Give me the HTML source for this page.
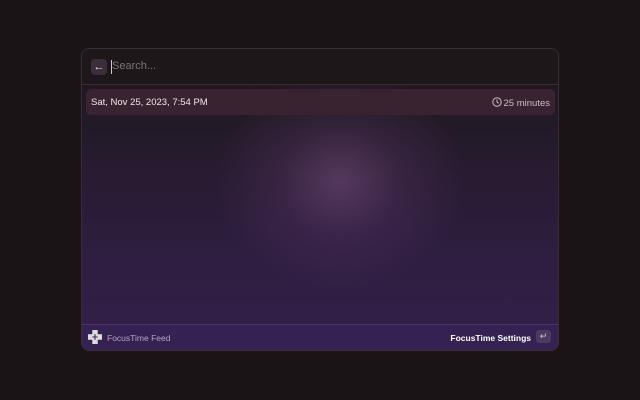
<!DOCTYPE html>
<html><head><style>
body{margin:0;width:640px;height:400px;background:#1a1416;font-family:"Liberation Sans",sans-serif;overflow:hidden;position:relative}
.win{position:absolute;left:81px;top:48px;width:478px;height:303px;border-radius:8px;overflow:hidden;border:1px solid #3a2d3a;box-sizing:border-box;
background:radial-gradient(ellipse 125px 110px at 258px 132px,rgba(130,85,135,.5),rgba(95,55,105,.28) 50%,rgba(0,0,0,0) 100%),linear-gradient(#1d171b 0px,#221a26 70px,#2c1d3c 180px,#34204c 303px)}
.hdr{position:absolute;left:0;top:0;right:0;height:35px;border-bottom:1px solid #3a2a38;background:#1d171a}
.back{position:absolute;left:9px;top:10px;width:16px;height:16px;border-radius:4px;background:#3b2d3a;color:#eee;font-size:11px;text-align:center;line-height:16px}
.cur{position:absolute;left:29px;top:11px;width:1px;height:14px;background:#ccc}
.ph{position:absolute;left:30px;top:11px;font-size:11px;color:#7a727a}
.row{position:absolute;left:4px;top:40px;width:469px;height:26px;border-radius:5px;background:#3a2330}
.row .d{position:absolute;left:5px;top:8px;font-size:9.5px;color:#ece6ec}
.row .m{position:absolute;right:5px;top:8px;font-size:9.5px;color:#c8bcc8}
.ftr{position:absolute;left:0;bottom:0;right:0;height:25px;border-top:1px solid #4a3566;background:#362252}
.ftr .l{position:absolute;left:25px;top:8px;font-size:8.5px;color:#b3a6c0}
.ftr .r{position:absolute;right:27px;top:8px;font-size:8.5px;color:#fff;font-weight:bold}
.kbd{position:absolute;right:7px;top:5px;width:15px;height:13px;border-radius:3px;background:#4b3a62;color:#ccc;font-size:9px;text-align:center;line-height:13px}
</style></head><body>
<div class="win">
<div class="hdr"><div class="back">←</div><div class="cur"></div><div class="ph">Search...</div></div>
<div class="row"><div class="d">Sat, Nov 25, 2023, 7:54 PM</div><div class="m"><svg width="10" height="10" viewBox="0 0 10 10" style="vertical-align:-1px;margin-right:2px"><circle cx="5" cy="5" r="4.2" fill="none" stroke="#c8bcc8" stroke-width="1"/><path d="M5 2.5V5l1.6 1.2" fill="none" stroke="#c8bcc8" stroke-width="1"/></svg>25 minutes</div></div>
<div class="ftr"><svg style="position:absolute;left:6px;top:5px" width="14" height="14" viewBox="0 0 13 13"><path d="M4 0h5v4h4v5h-4v4h-5v-4h-4v-5h4z" fill="#ddd"/><path d="M4 6.5h5M6.5 4v5" stroke="#362252" stroke-width="1"/></svg><div class="l">FocusTime Feed</div><div class="r">FocusTime Settings</div><div class="kbd">↵</div></div>
</div>
</body></html>
